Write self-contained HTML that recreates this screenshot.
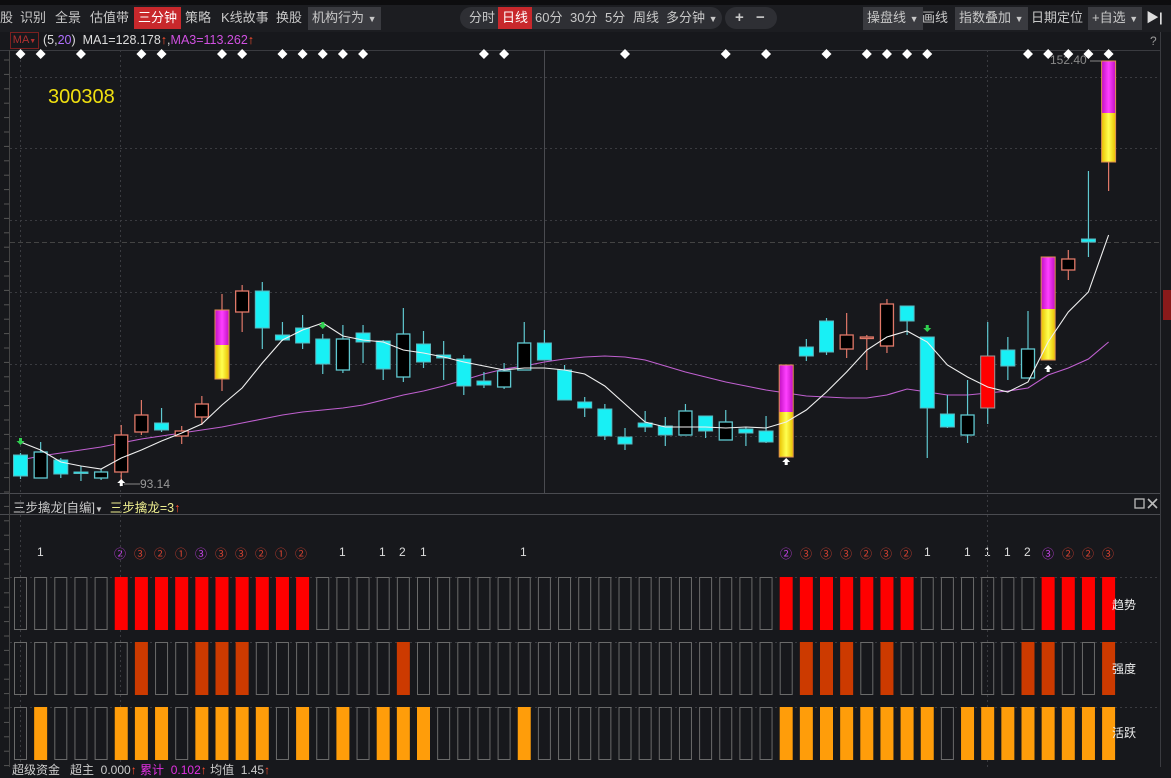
<!DOCTYPE html>
<html><head><meta charset="utf-8">
<style>
html,body{margin:0;padding:0;background:#17181c;width:1171px;height:767px;overflow:hidden;font-family:"Liberation Sans","Noto Sans CJK SC",sans-serif;}
.t{position:absolute;font-size:13px;color:#c8c8c8;white-space:nowrap;line-height:22px;top:7px;}
.g{background:#3a3b40;}
.rd{background:#c8282c;color:#fff;}
.pill{position:absolute;top:7px;height:22px;background:#2e2f34;border-radius:11px;}
svg{position:absolute;left:0;top:0;}
.z{z-index:5;}
</style></head><body>
<div style="position:absolute;left:0;top:0;width:1171px;height:5px;background:#0d0d0f"></div>
<div style="position:absolute;left:0;top:5px;width:1171px;height:27px;background:#1c1d21"></div>
<div class="pill" style="left:460px;width:262px"></div>
<div class="pill" style="left:725px;width:52px"></div>
<div class="t" style="left:0">股</div>
<div class="t" style="left:20px">识别</div>
<div class="t" style="left:55px">全景</div>
<div class="t" style="left:90px">估值带</div>
<div class="t rd" style="left:134px;padding:0 4px">三分钟</div>
<div class="t" style="left:185px">策略</div>
<div class="t" style="left:221px">K线故事</div>
<div class="t" style="left:276px">换股</div>
<div class="t g" style="left:308px;padding:0 4px">机构行为 <span style="font-size:9px">▼</span></div>
<div class="t" style="left:469px">分时</div>
<div class="t rd" style="left:498px;padding:0 4px">日线</div>
<div class="t" style="left:535px">60分</div>
<div class="t" style="left:570px">30分</div>
<div class="t" style="left:605px">5分</div>
<div class="t" style="left:633px">周线</div>
<div class="t" style="left:666px">多分钟 <span style="font-size:9px">▼</span></div>
<div class="t" style="left:735px;font-weight:bold;font-size:15px">+</div>
<div class="t" style="left:756px;font-weight:bold;font-size:15px">−</div>
<div class="t g" style="left:863px;padding:0 4px">操盘线 <span style="font-size:9px">▼</span></div>
<div class="t" style="left:922px">画线</div>
<div class="t g" style="left:955px;padding:0 4px">指数叠加 <span style="font-size:9px">▼</span></div>
<div class="t" style="left:1031px">日期定位</div>
<div class="t g" style="left:1088px;padding:0 4px">+自选 <span style="font-size:9px">▼</span></div>
<div class="t" style="left:1146px;font-weight:bold;color:#ddd">▶|</div>

<div style="position:absolute;left:10px;top:32px;width:27px;height:15px;border:1px solid #7a2020;color:#b03030;font-size:11px;line-height:15px;text-align:center">MA<span style="font-size:7px">▼</span></div>
<div style="position:absolute;left:43px;top:31px;font-size:12.5px;line-height:18px;color:#ddd;white-space:nowrap">(5,<span style="color:#b070ff">20</span>)&nbsp; MA1=128.178<span style="color:#ff5030">↑</span>,<span style="color:#d050e0">MA3=113.262</span><span style="color:#ff5030">↑</span></div>
<div style="position:absolute;left:1150px;top:34px;font-size:12px;color:#999">?</div>
<div style="position:absolute;left:48px;top:86px;font-size:20px;color:#f0e010">300308</div>
<div style="position:absolute;left:1050px;top:53px;font-size:12px;color:#888">152.40</div>
<div style="position:absolute;left:140px;top:477px;font-size:12px;color:#999">93.14</div>
<div style="position:absolute;left:13px;top:497px;font-size:12.5px;color:#c8c8c8;white-space:nowrap">三步擒龙[自编]<span style="font-size:8px">▼</span>&nbsp; <span style="color:#f0f090">三步擒龙=3</span><span style="color:#ff5030">↑</span></div>
<div class="z" style="position:absolute;left:1112px;top:596px;font-size:12px;color:#eee">趋势</div>
<div class="z" style="position:absolute;left:1112px;top:660px;font-size:12px;color:#eee">强度</div>
<div class="z" style="position:absolute;left:1112px;top:724px;font-size:12px;color:#eee">活跃</div>
<div class="z" style="position:absolute;left:12px;top:761px;font-size:12px;color:#ccc;white-space:nowrap">超级资金 &nbsp; 超主 &nbsp;0.000<span style="color:#ff5030">↑</span> <span style="color:#e030e0">累计 &nbsp;0.102</span><span style="color:#ff5030">↑</span> 均值 &nbsp;1.45<span style="color:#ff5030">↑</span></div>

<div style="position:absolute;top:545px;left:0;width:1171px;height:16px;font-size:12px;color:#ddd">
<span style="position:absolute;left:37px">1</span>
<span style="position:absolute;left:114px;color:#c040e0">②</span>
<span style="position:absolute;left:134px;color:#d04030">③</span>
<span style="position:absolute;left:154px;color:#d04030">②</span>
<span style="position:absolute;left:175px;color:#d04030">①</span>
<span style="position:absolute;left:195px;color:#c040e0">③</span>
<span style="position:absolute;left:215px;color:#d04030">③</span>
<span style="position:absolute;left:235px;color:#d04030">③</span>
<span style="position:absolute;left:255px;color:#d04030">②</span>
<span style="position:absolute;left:275px;color:#d04030">①</span>
<span style="position:absolute;left:295px;color:#d04030">②</span>
<span style="position:absolute;left:339px">1</span>
<span style="position:absolute;left:379px">1</span>
<span style="position:absolute;left:399px">2</span>
<span style="position:absolute;left:420px">1</span>
<span style="position:absolute;left:520px">1</span>
<span style="position:absolute;left:780px;color:#c040e0">②</span>
<span style="position:absolute;left:800px;color:#d04030">③</span>
<span style="position:absolute;left:820px;color:#d04030">③</span>
<span style="position:absolute;left:840px;color:#d04030">③</span>
<span style="position:absolute;left:860px;color:#d04030">②</span>
<span style="position:absolute;left:880px;color:#d04030">③</span>
<span style="position:absolute;left:900px;color:#d04030">②</span>
<span style="position:absolute;left:924px">1</span>
<span style="position:absolute;left:964px">1</span>
<span style="position:absolute;left:984px">1</span>
<span style="position:absolute;left:1004px">1</span>
<span style="position:absolute;left:1024px">2</span>
<span style="position:absolute;left:1042px;color:#c040e0">③</span>
<span style="position:absolute;left:1062px;color:#d04030">②</span>
<span style="position:absolute;left:1082px;color:#d04030">②</span>
<span style="position:absolute;left:1102px;color:#d04030">③</span>
</div>

<svg id="s" width="1171" height="767" xmlns="http://www.w3.org/2000/svg">
<defs>
<linearGradient id="mg" x1="0" x2="1"><stop offset="0" stop-color="#c010c0"/><stop offset=".5" stop-color="#ff40ff"/><stop offset="1" stop-color="#c010c0"/></linearGradient>
<linearGradient id="yg" x1="0" x2="1"><stop offset="0" stop-color="#e8c000"/><stop offset=".5" stop-color="#ffff50"/><stop offset="1" stop-color="#e8c000"/></linearGradient>
</defs>
<line x1="0" y1="50.5" x2="1160" y2="50.5" stroke="#3a3b40"/>
<line x1="0" y1="493.5" x2="1160" y2="493.5" stroke="#4a4b50"/>
<line x1="0" y1="514.5" x2="1160" y2="514.5" stroke="#4a4b50"/>
<line x1="1160.5" y1="32" x2="1160.5" y2="767" stroke="#3a3b40"/>
<line x1="9.5" y1="50" x2="9.5" y2="767" stroke="#444"/>
<g stroke="#3a3b40" stroke-dasharray="2,3">
<line x1="10" y1="77.5" x2="1160" y2="77.5"/><line x1="10" y1="148.5" x2="1160" y2="148.5"/>
<line x1="10" y1="220.5" x2="1160" y2="220.5"/><line x1="10" y1="292.5" x2="1160" y2="292.5"/>
<line x1="10" y1="364.5" x2="1160" y2="364.5"/><line x1="10" y1="436.5" x2="1160" y2="436.5"/>
<line x1="20.5" y1="50" x2="20.5" y2="767"/><line x1="120.5" y1="50" x2="120.5" y2="767"/>
<line x1="987.5" y1="50" x2="987.5" y2="767"/>
<line x1="10" y1="577.5" x2="1160" y2="577.5"/><line x1="10" y1="642.5" x2="1160" y2="642.5"/><line x1="10" y1="707.5" x2="1160" y2="707.5"/>
</g>
<line x1="10" y1="242.5" x2="1160" y2="242.5" stroke="#444" stroke-dasharray="5,3"/>
<line x1="544.5" y1="50" x2="544.5" y2="493" stroke="#4a4b50"/>
<rect x="1163" y="290" width="8" height="30" fill="#8a1a1a"/>
<rect x="1135" y="499" width="9" height="9" fill="none" stroke="#bbb" stroke-width="1.3"/>
<path d="M1148 499l9 9M1157 499l-9 9" stroke="#bbb" stroke-width="1.6"/>
<g id="ax" stroke="#555"></g>
<g id="c"></g>
</svg>
<script>
var NS="http://www.w3.org/2000/svg",g=document.getElementById('c'),ax=document.getElementById('ax');
function el(t,a,p){var e=document.createElementNS(NS,t);for(var k in a)e.setAttribute(k,a[k]);(p||g).appendChild(e);return e;}
for(var y=60;y<767;y+=14.4){el('line',{x1:4,x2:9,y1:y,y2:y},ax);}
function X(i){return 20.5+20.15*i;}
var C=[
['c',455,476,453,479],['h',452,478,442,478],['c',460,474,458,478],['c',472,473.5,466,481],['h',472,478,469,480],
['r',435,472,425,484],['r',415,432,400,435],['c',423,430,408,432],['r',431,436,426,444],['r',404,417,396,425],
['m',310,379,294,391,345],['r',291,312,285,332],['c',291,328,282,349],['c',335,340,322,341],['c',328,343,315,349],
['c',339,364,334,374],['h',339,370,325,373],['c',333,342,325,363],['c',341,369,340,380],['h',334,377,308,382],
['c',344,362,331,368],['c',355,358,341,380],['c',359,386,355,395],['c',381,385,372,388],['h',371,387,363,389],
['h',343,370,322,370],['c',343,360,330,360],['c',370,400,365,400],['c',402,408,397,417],['c',409,436,404,440],
['c',437,444,428,450],['c',423,427,411,432],['c',426,435,417,446],['h',411,435,404,435],['c',416,431,416,438],
['h',422,440,410,440],['c',429,433,427,446],['c',431,442,416,443],['m',365,457,365,457,412],['c',347,356,339,361],
['c',321,352,318,355],['r',335,349,313,358],['r',337,338.5,335,370],['r',304,346,299,353],['c',306,321,306,335],
['c',337,408,337,458],['c',414,427,395,428],['h',415,435,380,443],['R',356,408,322,424],['c',350,366,337,380],
['h',349,378,311,378],['m',257,360,257,360,309],['r',259,270,250,280],['c',239,242,171,257],['m',61,162,61,191,113]];
var ma5=[442,450,462,466,469,458,450,441,433,424,405,388,363,340,330,323,336,340,342,350,353,357,362,366,370,368,368,370,374,386,404,422,427,427,427,428,427,428,422,410,392,372,350,337,331,342,365,377,387,392,382,342,312,292,235];
var ma3=[460,456,453,450,447,443,439,436,433,430,427,423,419,415,412,410,408,405,400,395,391,386,380,374,369,366,362,359,357,356,357,360,366,372,377,382,386,390,393,396,397,398,398,395,389,392,395,395,393,391,388,375,368,359,342];
function pl(arr,col){var d='';for(var i=0;i<arr.length;i++)d+=(i?'L':'M')+X(i).toFixed(1)+' '+arr[i];el('path',{d:d,stroke:col,fill:'none','stroke-width':1.1});}
pl(ma3,'#c060d0');
var CY='#18f0f5',CB='#5fc8d0',SB='#e07868';
C.forEach(function(c,i){var x=X(i),bx=x-7,w=14;var t=c[0];
 var wc=(t=='r')?SB:(t=='m'?SB:CB);
 el('line',{x1:x,x2:x,y1:c[3],y2:c[4],stroke:wc,'stroke-width':1.2});
 var h=Math.max(c[2]-c[1],1.5);
 if(t=='c')el('rect',{x:bx,y:c[1],width:w,height:h,fill:CY,stroke:'#5ab8c0','stroke-width':1});
 else if(t=='h')el('rect',{x:bx+.5,y:c[1],width:w-1,height:h,fill:'#000',stroke:CB,'stroke-width':1.3});
 else if(t=='r')el('rect',{x:bx+.5,y:c[1],width:w-1,height:h,fill:'#000',stroke:SB,'stroke-width':1.3});
 else if(t=='R')el('rect',{x:bx,y:c[1],width:w,height:h,fill:'#ff0000',stroke:'#999','stroke-width':1});
 else{el('rect',{x:bx,y:c[1],width:w,height:c[5]-c[1],fill:'url(#mg)'});el('rect',{x:bx,y:c[5],width:w,height:c[2]-c[5],fill:'url(#yg)'});el('rect',{x:bx,y:c[1],width:w,height:c[2]-c[1],fill:'none',stroke:'#e09050','stroke-width':1});}
});
pl(ma5,'#f0f0f0');
function arr(i,y,col,up){var x=X(i);el('path',{d:up?('M'+x+' '+y+'l-4 4h2.5v3h3v-3h2.5z'):('M'+x+' '+(y+7)+'l-4 -4h2.5v-3h3v3h2.5z'),fill:col});}
arr(0,438,'#30d050',0);arr(15,322,'#30d050',0);arr(45,325,'#30d050',0);
arr(5,479,'#fff',1);arr(38,458,'#fff',1);arr(51,365,'#fff',1);
el('line',{x1:124,x2:140,y1:484,y2:484,stroke:'#888'});
el('line',{x1:1090,x2:1101,y1:61,y2:61,stroke:'#888'});
[0,1,3,6,7,10,11,13,14,15,16,17,23,24,30,35,37,40,42,43,44,45,50,51,52,53,54].forEach(function(i){var x=X(i);el('path',{d:'M'+x+' 49l5 5-5 5-5-5z',fill:'#fff'});});
var T=[5,6,7,8,9,10,11,12,13,14,38,39,40,41,42,43,44,51,52,53,54];
var S=[6,9,10,11,19,39,40,41,43,50,51,54];
var A=[1,5,6,7,9,10,11,12,14,16,18,19,20,25,38,39,40,41,42,43,44,45,47,48,49,50,51,52,53,54];
function row(set,y,col){for(var i=0;i<55;i++){var x=X(i)-6.5;if(set.indexOf(i)>=0)el('rect',{x:x,y:y,width:13,height:53,fill:col});else el('rect',{x:x+.5,y:y+.5,width:12,height:52,fill:'none',stroke:'#6a6a6a','stroke-width':1});}}
row(T,577,'#ff0000');row(S,642,'#cc3a00');row(A,707,'#ff9d0a');
</script>
</body></html>
